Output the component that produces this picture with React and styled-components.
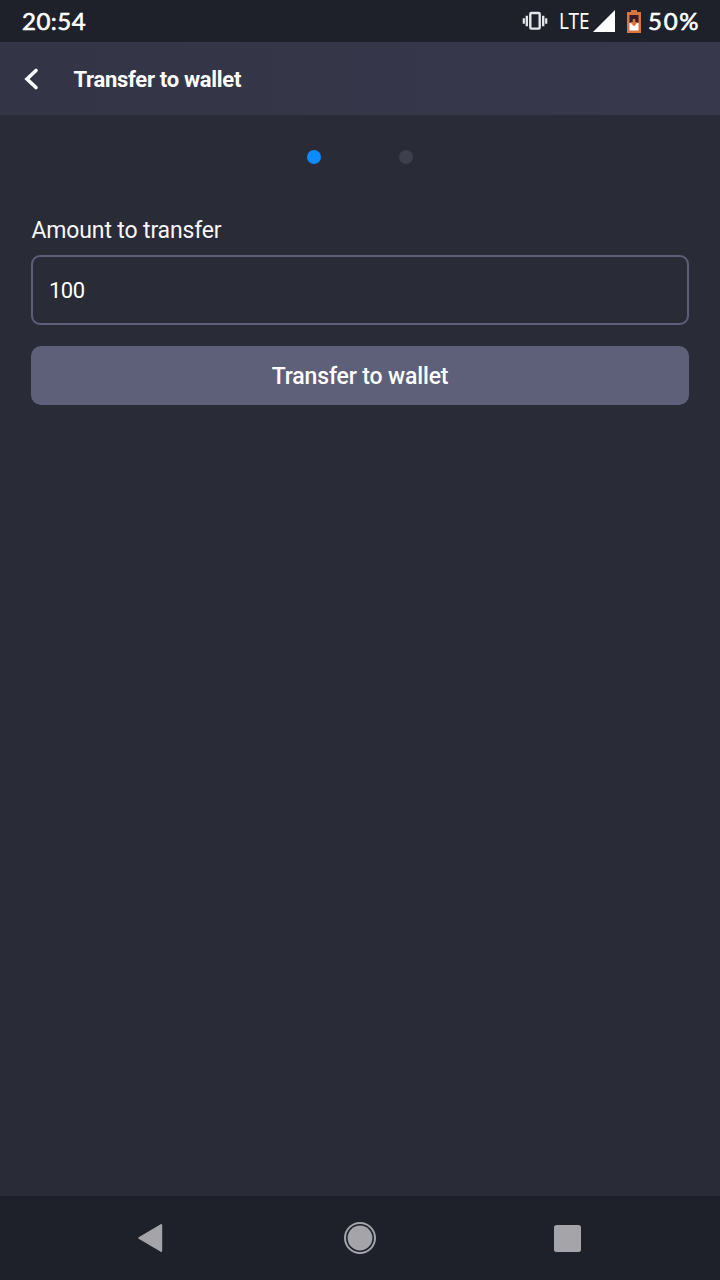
import React from "react";
import styled, { createGlobalStyle } from "styled-components";

const GlobalStyle = createGlobalStyle`
  * { box-sizing: border-box; }
  body { margin: 0; background: #292b37; }
`;

const Screen = styled.div`
  width: 720px;
  height: 1280px;
  display: flex;
  flex-direction: column;
  background: #292b37;
  color: #fff;
  font-family: Roboto, "Liberation Sans", sans-serif;
`;

const StatusBar = styled.div`
  height: 42px;
  flex: none;
  display: flex;
  align-items: center;
  justify-content: space-between;
  padding: 0 20px 0 22px;
  background: #1e2129;
`;

const StatusText = styled.span`
  font-family: Lato, "Liberation Sans", sans-serif;
  font-size: 24px;
  font-weight: 400;
  line-height: 42px;
  letter-spacing: ${(p) => p.$spacing || "0"};
  -webkit-text-stroke: 0.6px #fff;
  white-space: nowrap;
`;

const StatusIcons = styled.div`
  display: flex;
  align-items: center;
  height: 42px;
`;

const NetworkLabel = styled.span`
  width: 34px;
  font-family: "Noto Sans", sans-serif;
  font-size: 21px;
  line-height: 42px;
  transform: scaleX(0.9);
  transform-origin: left center;
`;

const Glyph = styled.svg`
  display: block;
  flex: none;
  margin-right: ${(p) => p.$gap || 0}px;
`;

const Header = styled.header`
  height: 73px;
  flex: none;
  display: flex;
  align-items: center;
  gap: 34.5px;
  padding: 0 24px;
  background: linear-gradient(90deg, #333546, #37384c);
`;

const Title = styled.h1`
  margin: 0;
  font-size: 22px;
  font-weight: 700;
  line-height: 26px;
  padding-top: 2px;
  letter-spacing: -0.3px;
`;

const Content = styled.main`
  flex: 1;
  display: flex;
  flex-direction: column;
  padding: 35px 31px 0;
`;

const Steps = styled.div`
  display: flex;
  justify-content: center;
  gap: 78px;
`;

const Step = styled.span`
  width: 14px;
  height: 14px;
  border-radius: 50%;
  background: ${(p) => (p.$active ? "#0a8cff" : "#3d404c")};
`;

const Label = styled.label`
  margin-top: 51px;
  height: 40px;
  padding: 1px 0 0 0.5px;
  font-size: 23px;
  line-height: 30px;
  letter-spacing: -0.15px;
  color: #f7f7fa;
`;

const AmountInput = styled.input`
  height: 70px;
  width: 658px;
  padding: 0 16px;
  border: 2px solid #5d5f7a;
  border-radius: 9px;
  background: transparent;
  color: #fff;
  font: 400 22px Roboto, sans-serif;
  letter-spacing: -0.5px;
  outline: none;
`;

const SubmitButton = styled.button`
  margin-top: 21px;
  height: 59px;
  width: 658px;
  padding: 2px 0 0;
  border: 0;
  border-radius: 10px;
  background: #5e607a;
  color: #fff;
  font: 500 23px Roboto, sans-serif;
  letter-spacing: -0.15px;
`;

const NavBar = styled.nav`
  height: 84px;
  flex: none;
  display: grid;
  grid-template-columns: 256px 208px 206px;
  align-items: center;
  background: #1e2129;
`;

const NavButton = styled.button`
  display: flex;
  justify-content: ${(p) => p.$align || "center"};
  padding: 0;
  padding-right: ${(p) => p.$inset || 0}px;
  border: 0;
  background: none;
`;

export default function App() {
  return (
    <Screen>
      <GlobalStyle />
      <StatusBar>
        <StatusText $spacing="0.5px">20:54</StatusText>
        <StatusIcons>
          <Glyph width="26" height="20" viewBox="0 0 26 20" $gap={11} fill="none" stroke="#e4e5e8">
            <rect x="8.3" y="2" width="9.4" height="15.6" rx="1" strokeWidth="2.4" />
            <path d="M4.8 4.8v10.4M21.2 4.8v10.4" strokeWidth="2.4" />
            <path d="M1.8 7.3v5.4M24.2 7.3v5.4" strokeWidth="2.2" />
          </Glyph>
          <NetworkLabel>LTE</NetworkLabel>
          <Glyph width="22" height="22" viewBox="0 0 22 22" $gap={12}>
            <path d="M0 22 22 0v22z" fill="#fff" />
          </Glyph>
          <Glyph width="14" height="23" viewBox="0 0 14 23" $gap={7}>
            <path d="M4 0h6v2h4v21H0V2h4z" fill="#d9753f" />
            <path d="M2.5 5h9v8h-9z" fill="#3b1c24" />
            <path d="M2.5 13h9v7.5h-9z" fill="#fff" />
            <path d="M5.7 9h2.6v3H11l-4 4.5L3 12h2.7z" fill="#d9753f" />
          </Glyph>
          <StatusText $spacing="1.6px">50%</StatusText>
        </StatusIcons>
      </StatusBar>

      <Header>
        <Glyph width="15" height="24" viewBox="0 0 15 24" fill="none">
          <path d="M12 3.5 3 12l9 8.5" stroke="#fff" strokeWidth="3.6" strokeLinecap="round" />
        </Glyph>
        <Title>Transfer to wallet</Title>
      </Header>

      <Content>
        <Steps>
          <Step $active />
          <Step />
        </Steps>
        <Label htmlFor="amount">Amount to transfer</Label>
        <AmountInput id="amount" defaultValue="100" />
        <SubmitButton>Transfer to wallet</SubmitButton>
      </Content>

      <NavBar>
        <NavButton $align="flex-end" $inset={93}>
          <Glyph width="26" height="30" viewBox="0 0 26 30">
            <path d="M2.2 15 24.2 2v26z" fill="#a5a4a9" stroke="#a5a4a9" strokeWidth="2" strokeLinejoin="round" />
          </Glyph>
        </NavButton>
        <NavButton>
          <Glyph width="32" height="32" viewBox="0 0 32 32">
            <circle cx="16" cy="16" r="15" fill="none" stroke="#a5a4a9" strokeWidth="2" />
            <circle cx="16" cy="16" r="12.4" fill="#a5a4a9" />
          </Glyph>
        </NavButton>
        <NavButton>
          <Glyph width="27" height="27" viewBox="0 0 27 27">
            <rect width="27" height="27" rx="2.5" fill="#a5a4a9" />
          </Glyph>
        </NavButton>
      </NavBar>
    </Screen>
  );
}
